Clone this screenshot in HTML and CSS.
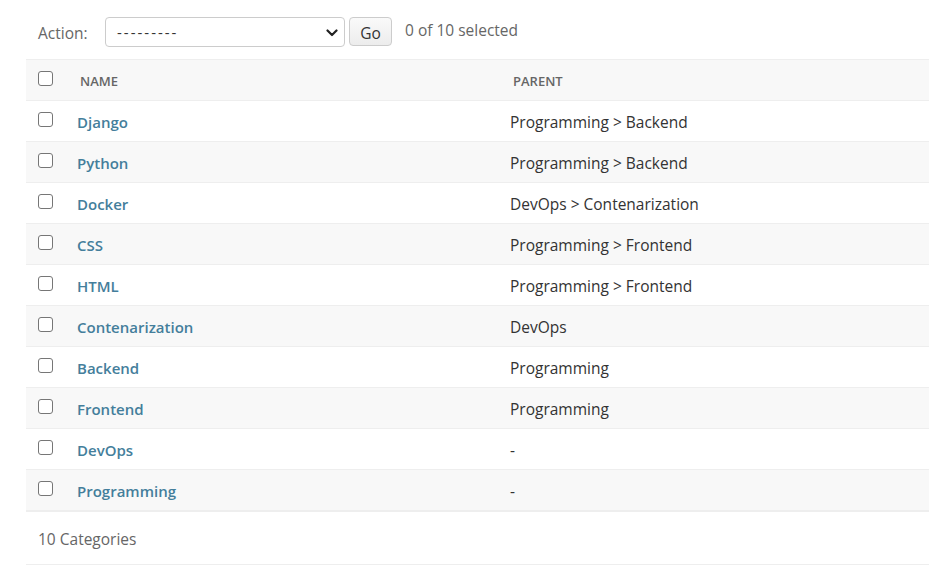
FILE: index.html
```html
<!DOCTYPE html>
<html>
<head>
<meta charset="utf-8">
<link rel="stylesheet" href="styles.css">
</head>
<body>
<div class="wrap">
  <div class="actions">
    <label class="action-label">Action:</label>
    <div class="select">
      <span>---------</span>
      <svg class="chev" width="12" height="8" viewBox="0 0 12 8"><path d="M1.5 1.5 L6 6 L10.5 1.5" fill="none" stroke="#222" stroke-width="2.2" stroke-linecap="round" stroke-linejoin="round"/></svg>
    </div>
    <button class="go">Go</button>
    <span class="counter">0 of 10 selected</span>
  </div>
  <table class="results">
    <colgroup><col class="w-cb"><col class="w-name"><col></colgroup>
    <thead>
      <tr><th class="cb"><span class="box"></span></th><th class="c-name">NAME</th><th class="c-parent">PARENT</th></tr>
    </thead>
    <tbody>
      <tr><td class="cb"><span class="box"></span></td><td class="c-name"><a>Django</a></td><td class="c-parent">Programming &gt; Backend</td></tr>
      <tr><td class="cb"><span class="box"></span></td><td class="c-name"><a>Python</a></td><td class="c-parent">Programming &gt; Backend</td></tr>
      <tr><td class="cb"><span class="box"></span></td><td class="c-name"><a>Docker</a></td><td class="c-parent">DevOps &gt; Contenarization</td></tr>
      <tr><td class="cb"><span class="box"></span></td><td class="c-name"><a>CSS</a></td><td class="c-parent">Programming &gt; Frontend</td></tr>
      <tr><td class="cb"><span class="box"></span></td><td class="c-name"><a>HTML</a></td><td class="c-parent">Programming &gt; Frontend</td></tr>
      <tr><td class="cb"><span class="box"></span></td><td class="c-name"><a>Contenarization</a></td><td class="c-parent">DevOps</td></tr>
      <tr><td class="cb"><span class="box"></span></td><td class="c-name"><a>Backend</a></td><td class="c-parent">Programming</td></tr>
      <tr><td class="cb"><span class="box"></span></td><td class="c-name"><a>Frontend</a></td><td class="c-parent">Programming</td></tr>
      <tr><td class="cb"><span class="box"></span></td><td class="c-name"><a>DevOps</a></td><td class="c-parent">-</td></tr>
      <tr><td class="cb"><span class="box"></span></td><td class="c-name"><a>Programming</a></td><td class="c-parent">-</td></tr>
    </tbody>
  </table>
  <p class="paginator">10 Categories</p>
</div>
</body>
</html>
```

FILE: styles.css
```css
html, body { margin: 0; padding: 0; background: #fff; }
body { font-family: "Open Sans", "Noto Sans", sans-serif; color: #333; font-size: 15.5px; }
.wrap { padding-left: 26px; }
.actions { display: flex; align-items: flex-start; height: 59px; padding: 17px 0 0 12px; box-sizing: border-box; }
.action-label { font-size: 15.5px; color: #666; margin-right: 16px; margin-top: 5px; width: 51px; }
.select { width: 240px; height: 30px; box-sizing: border-box; border: 1px solid #ccc; border-radius: 4px; display: flex; align-items: center; justify-content: space-between; padding: 0 6px 0 11px; font-size: 15px; color: #333; margin-right: 4px; }
.select span { letter-spacing: 2px; }
.chev { margin-top: 1px; }
.go { height: 29px; width: 43px; border: 1px solid #ccc; border-radius: 4px; background: linear-gradient(#fafafa, #ececec); font-family: inherit; font-size: 15.5px; color: #333; padding: 2px 0 0; }
.counter { font-size: 15.5px; color: #666; margin-left: 13px; margin-top: 2px; }
.results { width: 100%; border-collapse: collapse; table-layout: fixed; }
.w-cb { width: 39px; }
.w-name { width: 433px; }
.results th { background: #f8f8f8; border-top: 1px solid #eee; border-bottom: 1px solid #eee; height: 38px; text-align: left; font-size: 13px; font-weight: 600; color: #666; padding: 2px 0 0; }
.results td { height: 38px; border-bottom: 1px solid #eee; padding: 2px 0 0; font-size: 15.5px; }
.results tbody tr:nth-child(even) td { background: #f8f8f8; }
.results tbody tr:last-child td { border-bottom: 2px solid #eee; }
.box { display: block; width: 13px; height: 13px; border: 1px solid #767676; border-radius: 3px; margin-left: 12px; margin-top: -5px; background: #fff; }
th .box { margin-top: -6px; }
td.c-name { padding-left: 12px; }
th.c-name { padding-left: 15px; }
td.c-parent { padding-left: 12px; }
th.c-parent { padding-left: 15px; }
.c-name a { color: #447e9b; font-weight: 600; font-size: 15px; text-decoration: none; }
.paginator { margin: 0; height: 52px; line-height: 54px; border-bottom: 1px solid #eee; padding-left: 12px; color: #666; font-size: 15.5px; }
```
